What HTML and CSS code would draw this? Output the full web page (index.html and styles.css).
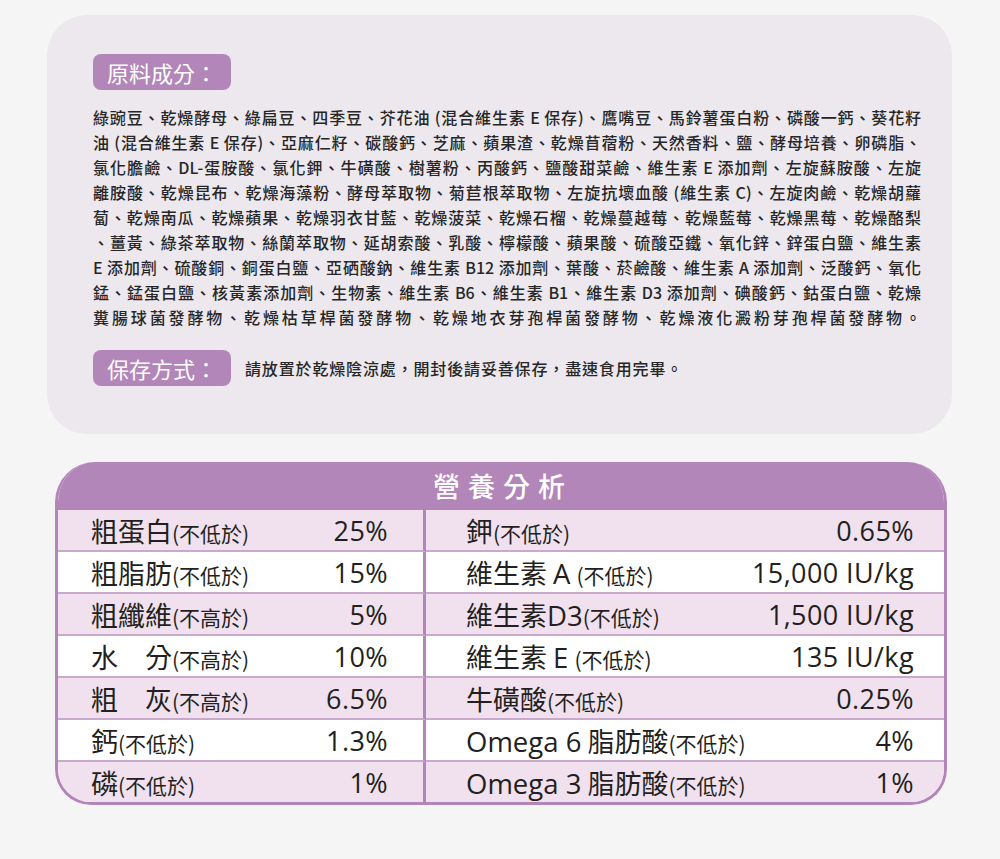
FILE: index.html
```html
<!DOCTYPE html>
<html lang="zh-Hant">
<head>
<meta charset="utf-8">
<title>原料成分與營養分析</title>
<link rel="stylesheet" href="styles.css">
</head>
<body>
<section class="card">
  <div class="tag">原料成分：</div>
  <div class="ingredients">
    <span class="line">綠豌豆、乾燥酵母、綠扁豆、四季豆、芥花油 (混合維生素 E 保存)、鷹嘴豆、馬鈴薯蛋白粉、磷酸一鈣、葵花籽</span>
    <span class="line">油 (混合維生素 E 保存)、亞麻仁籽、碳酸鈣、芝麻、蘋果渣、乾燥苜蓿粉、天然香料、鹽、酵母培養、卵磷脂、</span>
    <span class="line">氯化膽鹼、DL-蛋胺酸、氯化鉀、牛磺酸、樹薯粉、丙酸鈣、鹽酸甜菜鹼、維生素 E 添加劑、左旋蘇胺酸、左旋</span>
    <span class="line">離胺酸、乾燥昆布、乾燥海藻粉、酵母萃取物、菊苣根萃取物、左旋抗壞血酸 (維生素 C)、左旋肉鹼、乾燥胡蘿</span>
    <span class="line">蔔、乾燥南瓜、乾燥蘋果、乾燥羽衣甘藍、乾燥菠菜、乾燥石榴、乾燥蔓越莓、乾燥藍莓、乾燥黑莓、乾燥酪梨</span>
    <span class="line">、薑黃、綠茶萃取物、絲蘭萃取物、延胡索酸、乳酸、檸檬酸、蘋果酸、硫酸亞鐵、氧化鋅、鋅蛋白鹽、維生素</span>
    <span class="line">E 添加劑、硫酸銅、銅蛋白鹽、亞硒酸鈉、維生素 B12 添加劑、葉酸、菸鹼酸、維生素 A 添加劑、泛酸鈣、氧化</span>
    <span class="line">錳、錳蛋白鹽、核黃素添加劑、生物素、維生素 B6、維生素 B1、維生素 D3 添加劑、碘酸鈣、鈷蛋白鹽、乾燥</span>
    <span class="line">糞腸球菌發酵物、乾燥枯草桿菌發酵物、乾燥地衣芽孢桿菌發酵物、乾燥液化澱粉芽孢桿菌發酵物。</span>
  </div>
  <div class="storage">
    <div class="tag">保存方式：</div>
    <p class="storage-text">請放置於乾燥陰涼處，開封後請妥善保存，盡速食用完畢。</p>
  </div>
</section>

<section class="nutrition">
  <h2 class="nutrition-title">營養分析</h2>
  <div class="grid">
    <div class="cell left pink"><span class="name">粗蛋白<small>(不低於)</small></span><span class="val">25%</span></div>
    <div class="cell pink"><span class="name">鉀<small>(不低於)</small></span><span class="val">0.65%</span></div>

    <div class="cell left"><span class="name">粗脂肪<small>(不低於)</small></span><span class="val">15%</span></div>
    <div class="cell"><span class="name">維生素 <span class="lat">A</span> <small>(不低於)</small></span><span class="val">15,000 IU/kg</span></div>

    <div class="cell left pink"><span class="name">粗纖維<small>(不高於)</small></span><span class="val">5%</span></div>
    <div class="cell pink"><span class="name">維生素<span class="lat">D3</span><small>(不低於)</small></span><span class="val">1,500 IU/kg</span></div>

    <div class="cell left"><span class="name">水　分<small>(不高於)</small></span><span class="val">10%</span></div>
    <div class="cell"><span class="name">維生素 <span class="lat">E</span> <small>(不低於)</small></span><span class="val">135 IU/kg</span></div>

    <div class="cell left pink"><span class="name">粗　灰<small>(不高於)</small></span><span class="val">6.5%</span></div>
    <div class="cell pink"><span class="name">牛磺酸<small>(不低於)</small></span><span class="val">0.25%</span></div>

    <div class="cell left"><span class="name">鈣<small>(不低於)</small></span><span class="val">1.3%</span></div>
    <div class="cell"><span class="name"><span class="lat">Omega 6</span> 脂肪酸<small>(不低於)</small></span><span class="val">4%</span></div>

    <div class="cell left pink last"><span class="name">磷<small>(不低於)</small></span><span class="val">1%</span></div>
    <div class="cell pink last"><span class="name"><span class="lat">Omega 3</span> 脂肪酸<small>(不低於)</small></span><span class="val">1%</span></div>
  </div>
</section>
</body>
</html>
```

FILE: styles.css
```css
html, body {
  margin: 0;
  padding: 0;
}

body {
  background: #f5f5f5;
  font-family: "Noto Sans CJK TC", "Noto Sans", sans-serif;
  color: #231f20;
  padding-top: 15px;
  padding-bottom: 54px;
}

.card {
  box-sizing: border-box;
  margin-left: 47px;
  width: 905px;
  background: #ece8ee;
  border-radius: 40px;
  padding: 39px 0 48px 46px;
}

.tag {
  display: inline-block;
  height: 36px;
  line-height: 36px;
  padding: 0 14px;
  background: #b386b9;
  color: #ffffff;
  font-size: 22px;
  border-radius: 8px;
}

.ingredients {
  margin-top: 15px;
  width: 828px;
  font-size: 16px;
  font-weight: 500;
  line-height: 25px;
  color: #262626;
}

.line {
  display: block;
  text-align: justify;
  text-align-last: justify;
}

.storage {
  margin-top: 20px;
  display: flex;
  align-items: center;
  gap: 14px;
}

.storage-text {
  margin: 0;
  font-size: 16px;
  font-weight: 500;
  letter-spacing: 0.85px;
  color: #262626;
}

.nutrition {
  box-sizing: border-box;
  margin: 28px 0 0 55px;
  width: 892px;
  border: 3px solid #b386b9;
  border-top: none;
  border-radius: 40px 40px 36px 36px;
  overflow: hidden;
  background: #ffffff;
}

.nutrition-title {
  margin: 0;
  height: 48px;
  line-height: 48px;
  background: #b386b9;
  color: #ffffff;
  text-align: center;
  font-size: 27px;
  font-weight: 500;
  letter-spacing: 8px;
  padding-left: 4px;
}

.grid {
  display: grid;
  grid-template-columns: 368px 1fr;
}

.cell {
  display: flex;
  align-items: center;
  justify-content: space-between;
  height: 40px;
  border-bottom: 2px solid #c9aacd;
  padding: 0 30px 0 40px;
  font-size: 27px;
  white-space: nowrap;
}

.cell.left {
  border-right: 3px solid #b386b9;
  padding: 0 35px 0 33px;
}

.cell.pink {
  background: #f1e1ef;
}

.cell.last {
  border-bottom: none;
}

.name {
  font-family: "Noto Sans CJK TC", sans-serif;
}

.name small {
  font-size: 21px;
}

.lat {
  font-family: "Open Sans", sans-serif;
  font-size: 27.5px;
}

.val {
  font-family: "Open Sans", sans-serif;
  font-size: 27px;
  letter-spacing: 0.4px;
}
```
